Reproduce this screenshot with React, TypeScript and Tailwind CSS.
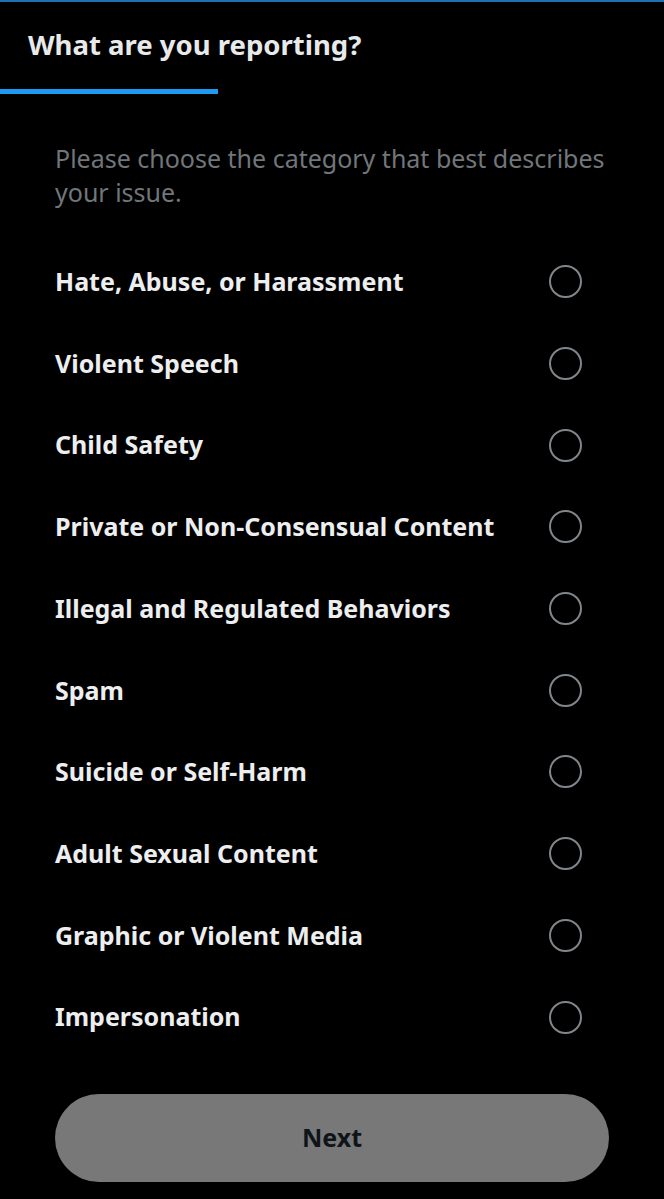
import React from "react";

const items = [
  "Hate, Abuse, or Harassment",
  "Violent Speech",
  "Child Safety",
  "Private or Non-Consensual Content",
  "Illegal and Regulated Behaviors",
  "Spam",
  "Suicide or Self-Harm",
  "Adult Sexual Content",
  "Graphic or Violent Media",
  "Impersonation",
];

export default function App() {
  return (
    <div
      className="w-[664px] h-[1199px] bg-black overflow-hidden flex flex-col"
      style={{ fontFamily: '"Noto Sans", "Open Sans", Arial, sans-serif' }}
    >
      <div className="h-[2px] bg-[#1d6fb8]" />
      <div className="h-[87px] flex items-center pl-[28px]">
        <h1 className="text-[27.5px] font-bold text-[#e7e9ea] leading-none pb-[2px]">
          What are you reporting?
        </h1>
      </div>
      <div className="h-[5px] w-[218px] bg-[#1d9bf0]" />
      <div className="px-[55px] pt-[47px]">
        <p className="text-[25px] leading-[34px] text-[#71767b]">
          Please choose the category that best describes your issue.
        </p>
      </div>
      <div className="mt-[32px] flex flex-col">
        {items.map((t) => (
          <div
            key={t}
            className="h-[81.7px] flex items-center justify-between pl-[55px] pr-[82px]"
          >
            <span className="text-[25px] font-bold text-[#eceeef]">{t}</span>
            <span className="w-[33px] h-[33px] rounded-full border-[2.5px] border-[#81868b]" />
          </div>
        ))}
      </div>
      <div className="px-[55px] mt-[36px]">
        <button className="w-full h-[88px] rounded-full bg-[#787878] text-[25px] font-bold text-[#0f1419]">
          Next
        </button>
      </div>
    </div>
  );
}
